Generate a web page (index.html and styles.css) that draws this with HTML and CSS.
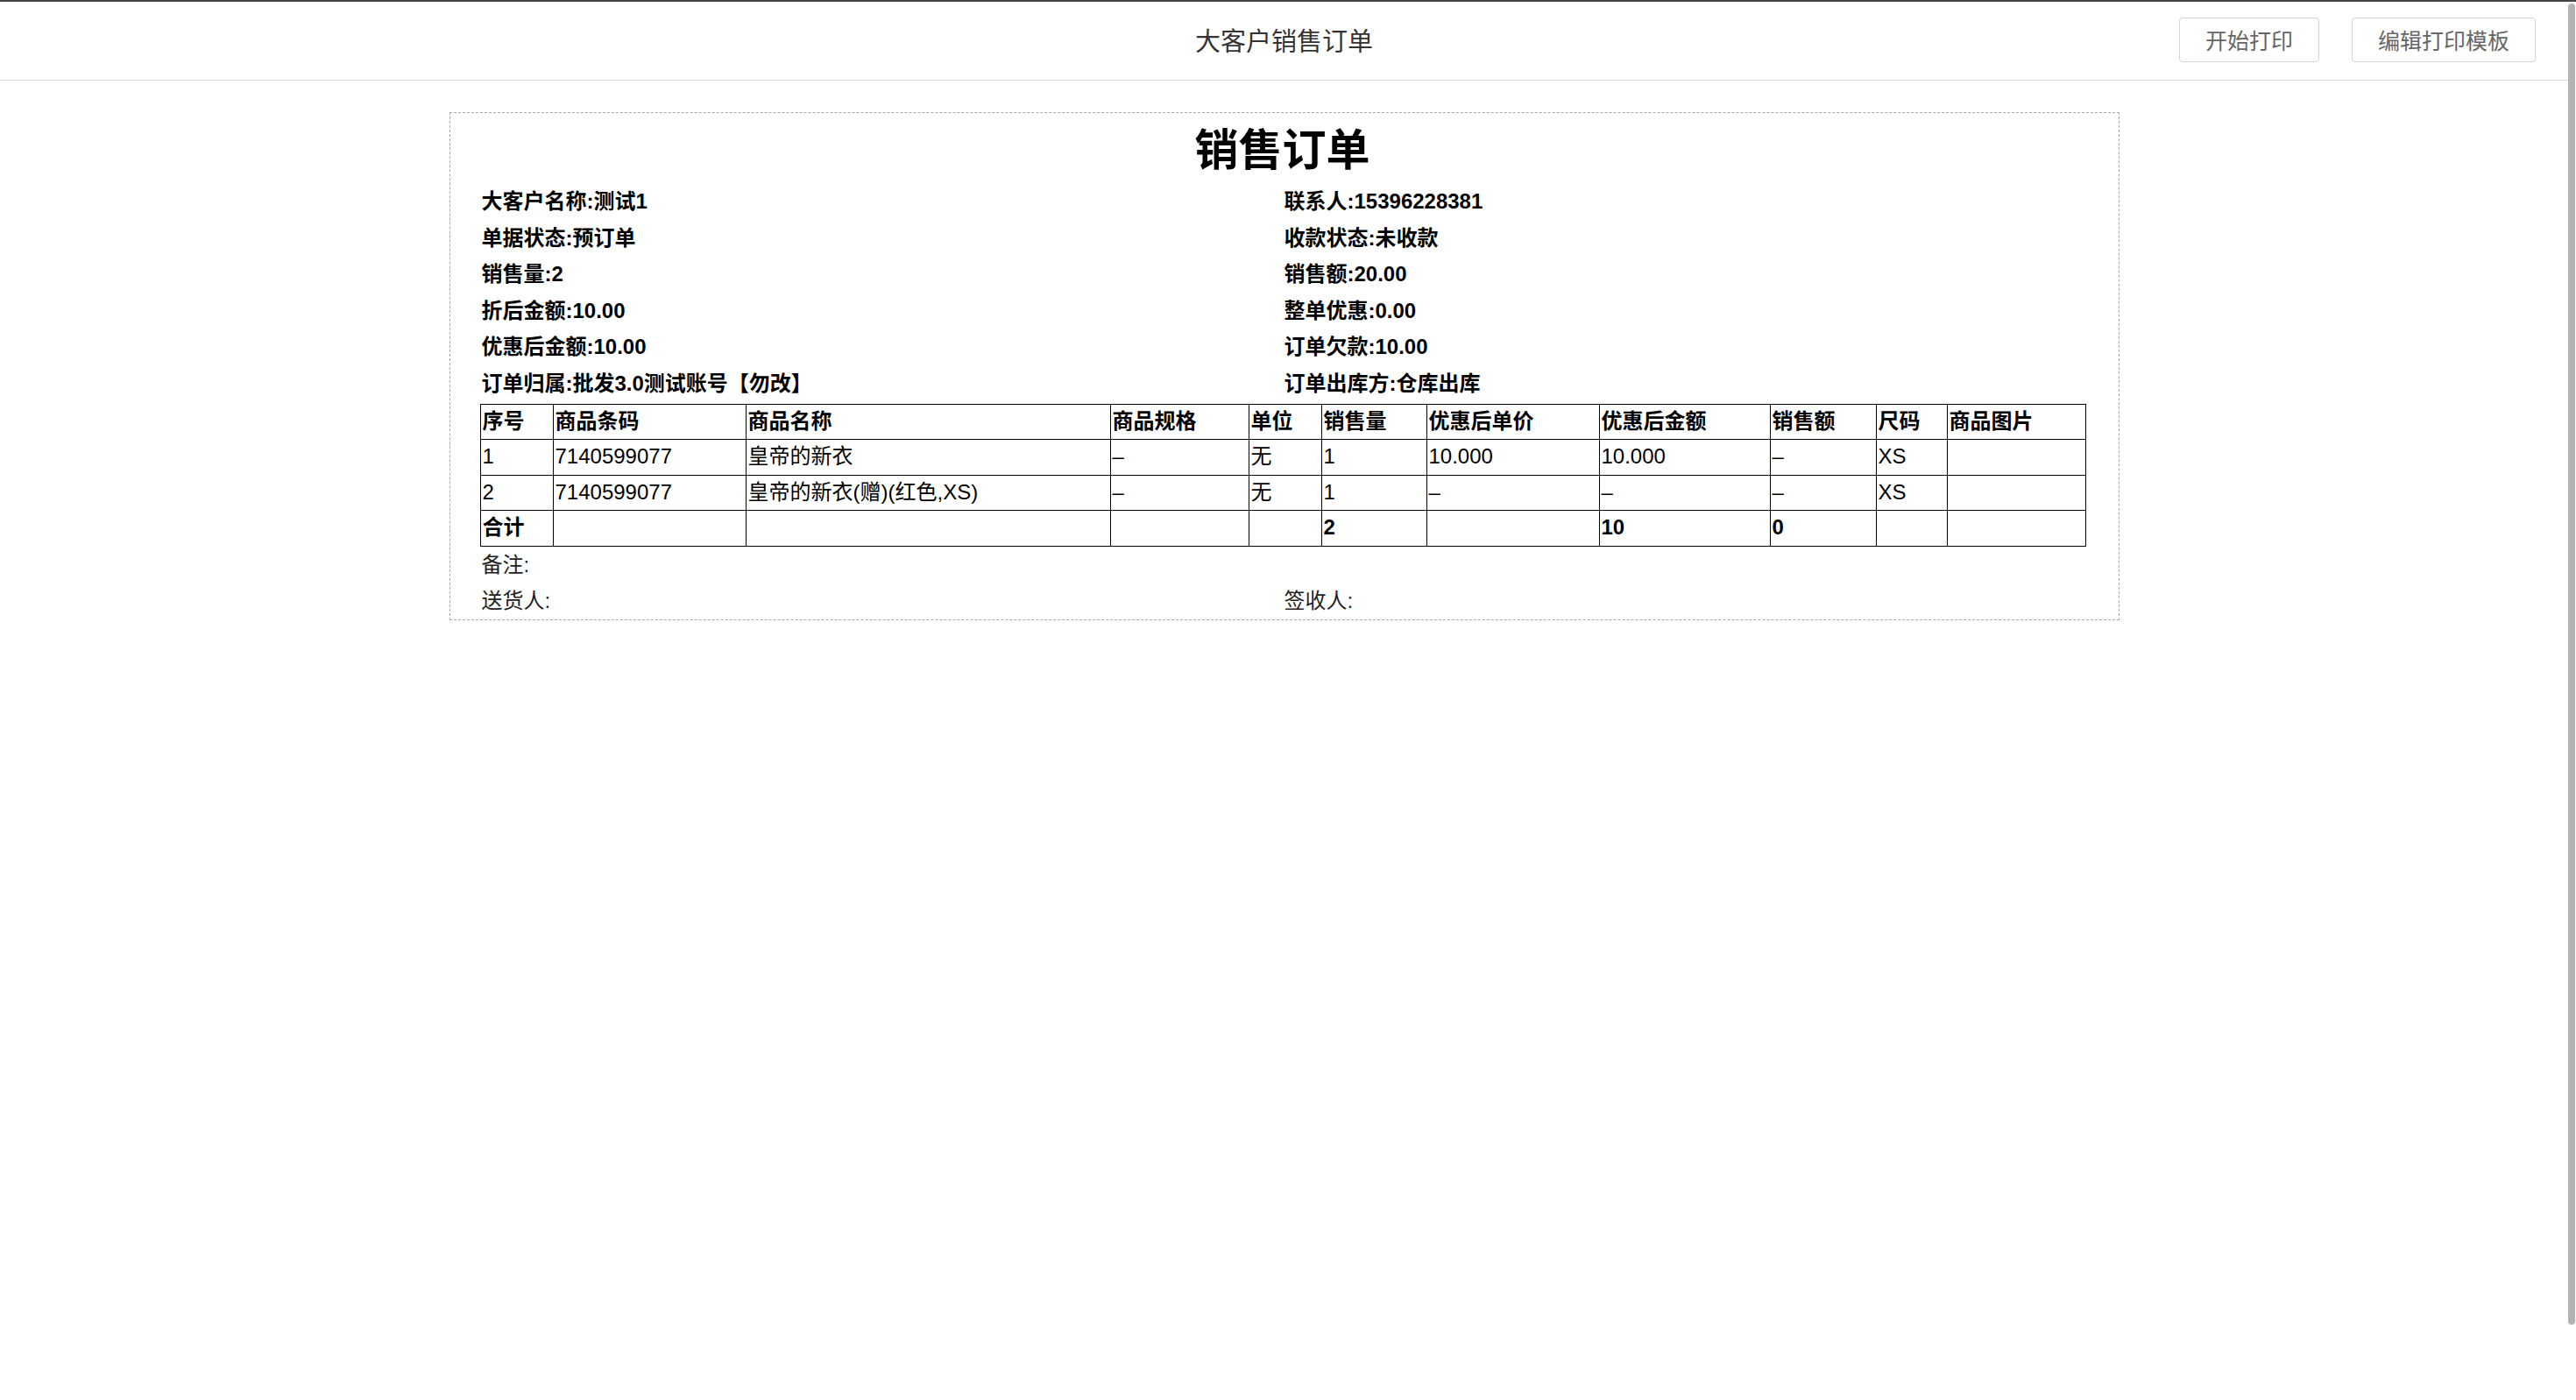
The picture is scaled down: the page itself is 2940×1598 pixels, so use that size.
FILE: index.html
```html
<!DOCTYPE html>
<html lang="zh-CN">
<head>
<meta charset="utf-8">
<title>大客户销售订单</title>
<link rel="stylesheet" href="styles.css">
</head>
<body>
<div class="shell">
  <div class="app">
    <header class="header">
      <div class="header-side"></div>
      <h1 class="header-title">大客户销售订单</h1>
      <div class="header-actions">
        <button class="btn">开始打印</button>
        <button class="btn">编辑打印模板</button>
      </div>
    </header>
    <main class="main">
      <section class="sheet">
        <h2 class="sheet-title">销售订单</h2>
        <div class="info">
          <div class="info-item">大客户名称:测试1</div>
          <div class="info-item">联系人:15396228381</div>
          <div class="info-item">单据状态:预订单</div>
          <div class="info-item">收款状态:未收款</div>
          <div class="info-item">销售量:2</div>
          <div class="info-item">销售额:20.00</div>
          <div class="info-item">折后金额:10.00</div>
          <div class="info-item">整单优惠:0.00</div>
          <div class="info-item">优惠后金额:10.00</div>
          <div class="info-item">订单欠款:10.00</div>
          <div class="info-item">订单归属:批发3.0测试账号【勿改】</div>
          <div class="info-item">订单出库方:仓库出库</div>
        </div>
        <table class="goods">
          <colgroup>
            <col class="c1"><col class="c2"><col class="c3"><col class="c4"><col class="c5"><col class="c6"><col class="c7"><col class="c8"><col class="c9"><col class="c10"><col class="c11">
          </colgroup>
          <thead>
            <tr>
              <th>序号</th><th>商品条码</th><th>商品名称</th><th>商品规格</th><th>单位</th><th>销售量</th><th>优惠后单价</th><th>优惠后金额</th><th>销售额</th><th>尺码</th><th>商品图片</th>
            </tr>
          </thead>
          <tbody>
            <tr>
              <td>1</td><td>7140599077</td><td>皇帝的新衣</td><td>–</td><td>无</td><td>1</td><td>10.000</td><td>10.000</td><td>–</td><td>XS</td><td></td>
            </tr>
            <tr>
              <td>2</td><td>7140599077</td><td>皇帝的新衣(赠)(红色,XS)</td><td>–</td><td>无</td><td>1</td><td>–</td><td>–</td><td>–</td><td>XS</td><td></td>
            </tr>
            <tr class="total">
              <td>合计</td><td></td><td></td><td></td><td></td><td>2</td><td></td><td>10</td><td>0</td><td></td><td></td>
            </tr>
          </tbody>
        </table>
        <div class="remark">备注:</div>
        <div class="signs">
          <div class="sign">送货人:</div>
          <div class="sign">签收人:</div>
        </div>
      </section>
    </main>
  </div>
  <div class="scrollbar"><div class="thumb"></div></div>
</div>
</body>
</html>
```
FILE: styles.css
```css
html, body {
  margin: 0;
  padding: 0;
  height: 100%;
  overflow: hidden;
  background: #fff;
}

body {
  border-top: 2px solid #444;
  box-sizing: border-box;
  font-family: "Liberation Sans", "Noto Sans CJK SC", sans-serif;
  color: #000;
}

.shell {
  display: flex;
  height: 100%;
}

.app {
  flex: 1;
  min-width: 0;
}

.scrollbar {
  width: 9px;
  flex: none;
  padding-top: 2px;
}

.thumb {
  width: 8px;
  height: 1508px;
  background: #b3b3b3;
  border-radius: 4px;
}

.header {
  height: 89px;
  border-bottom: 1px solid #dcdcdc;
  display: grid;
  grid-template-columns: 1fr auto 1fr;
  align-items: center;
}

.header-title {
  margin: 0 0 2px;
  font-family: "Noto Sans CJK SC", sans-serif;
  font-size: 29px;
  font-weight: 400;
  color: #333;
  line-height: 1;
}

.header-actions {
  justify-self: end;
  display: flex;
  gap: 37px;
  padding-right: 37px;
  margin-bottom: 2px;
}

.btn {
  height: 51px;
  padding: 0 29px;
  border: 1px solid #d4d4d4;
  border-radius: 4px;
  background: #fff;
  font-family: "Noto Sans CJK SC", sans-serif;
  font-size: 25px;
  color: #666;
  line-height: 1;
}

.main {
  padding-top: 36px;
}

.sheet {
  box-sizing: border-box;
  width: 1906px;
  margin: 0 auto;
  border: 1px dashed #a8a8a8;
  padding: 0 38px 0 34px;
}

.sheet-title {
  margin: 0;
  height: 81px;
  line-height: 76px;
  text-align: center;
  font-family: "Noto Sans CJK SC", sans-serif;
  font-size: 50px;
  font-weight: 700;
}

.info {
  display: grid;
  grid-template-columns: 916px 1fr;
}

.info-item {
  height: 41.5px;
  line-height: 40px;
  font-size: 24px;
  font-weight: 600;
  padding-left: 2px;
  white-space: nowrap;
}

.goods {
  margin-top: 1.5px;
  width: 1832px;
  table-layout: fixed;
  border-collapse: collapse;
  font-size: 24px;
}

.c1 { width: 83px; }
.c2 { width: 220px; }
.c3 { width: 416px; }
.c4 { width: 158px; }
.c5 { width: 83px; }
.c6 { width: 120px; }
.c7 { width: 197px; }
.c8 { width: 195px; }
.c9 { width: 121px; }
.c10 { width: 81px; }
.c11 { width: 158px; }

.goods tr {
  height: 40.5px;
}

.goods th,
.goods td {
  border: 1px solid #000;
  padding: 0 2px 1px;
  text-align: left;
  vertical-align: middle;
  line-height: 1;
  white-space: nowrap;
  overflow: hidden;
}

.goods th {
  font-weight: 600;
}

.goods td {
  font-weight: 400;
}

.goods .total td {
  font-weight: 600;
}

.remark,
.sign {
  height: 41.5px;
  line-height: 42px;
  font-size: 24px;
  color: #222;
  padding-left: 2px;
}

.signs {
  display: grid;
  grid-template-columns: 916px 1fr;
}
```
